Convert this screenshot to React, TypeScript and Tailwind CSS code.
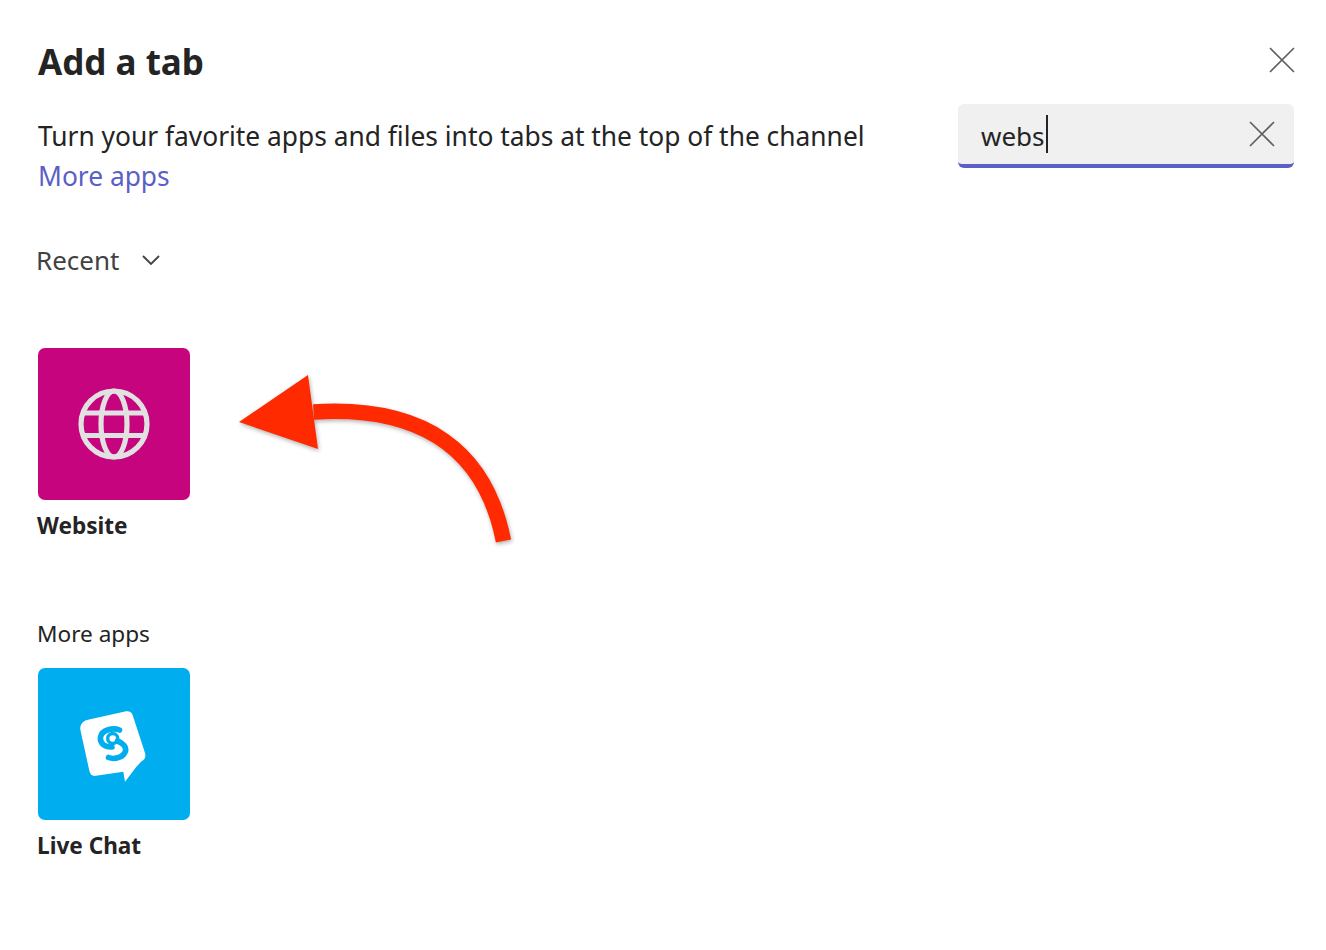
import React from "react";

function XIcon({ className }: { className: string }) {
  return (
    <svg className={className} viewBox="0 0 26 26" fill="none" stroke="#616161" strokeWidth="1.7">
      <path d="M1 1 L25 25 M25 1 L1 25" />
    </svg>
  );
}

function Globe() {
  return (
    <svg className="w-[76px] h-[76px]" viewBox="0 0 76 76" fill="none" stroke="#e1e1e1" strokeWidth="5.2">
      <circle cx="38" cy="38" r="33" />
      <ellipse cx="38" cy="38" rx="13" ry="33" />
      <path d="M8 27 H68 M8 49.5 H68" />
    </svg>
  );
}

function ChatLogo() {
  return (
    <svg className="w-[76px] h-[80px]" viewBox="0 0 76 80" fill="none">
      <path
        d="M12 15.8 L49 7.6 C53 6.8 55.6 8 56.8 11.4 L69 49 C70.2 53 68.6 56 65 57.8 L60 63.3 L49 77.7 L47.3 67.7 L20 71.8 C16.4 72.4 14.2 70.6 13.4 67 L4.4 26 C3.6 20.8 7 16.8 12 15.8 Z"
        fill="#ffffff"
      />
      <path
        d="M43.5 26 C37 23.5 26 25.5 24.5 33 C23.5 39.5 29 43.5 36 43"
        stroke="#00aeef"
        strokeWidth="5.6"
        strokeLinecap="round"
      />
      <circle cx="36.7" cy="34.5" r="5" stroke="#00aeef" strokeWidth="3.4" />
      <path d="M41.5 37 C47 39 50.5 43 49.5 47 C48 53 39 56 32.5 53.5" stroke="#00aeef" strokeWidth="5.6" strokeLinecap="round" />
    </svg>
  );
}

function Arrow() {
  return (
    <svg
      className="absolute left-[230px] top-[365px] w-[295px] h-[190px] drop-shadow-[1px_2px_2px_rgba(0,0,0,0.3)]"
      viewBox="230 365 295 190"
      fill="none"
    >
      <path d="M313.5 412 C 425 405, 486 452, 503.5 541" stroke="#ff2a00" strokeWidth="15.5" />
      <path d="M239 422 L308 375 L318 449 Z" fill="#ff2a00" />
    </svg>
  );
}

function Tile({ color, label, children }: { color: string; label: string; children: React.ReactNode }) {
  return (
    <div className="w-[152px]">
      <div className={`w-[152px] h-[152px] rounded-[7px] flex items-center justify-center ${color}`}>{children}</div>
      <div className="mt-[10px] ml-[-1px] text-[22.6px] leading-[32px] font-bold text-[#242424] whitespace-nowrap">{label}</div>
    </div>
  );
}

export default function App() {
  return (
    <div className="relative w-[1326px] h-[950px] bg-white overflow-hidden pl-[38px] pr-[32px] font-['Noto_Sans','Open_Sans',sans-serif] text-[#242424]">
      <div className="flex items-center justify-between pt-[38px]">
        <h1 className="text-[35px] leading-[48px] font-bold">Add a tab</h1>
        <XIcon className="w-[26px] h-[26px] mr-[-1px] mb-[4px]" />
      </div>
      <div className="flex justify-between items-start mt-[18px]">
        <div className="text-[26.35px] leading-[40px] pt-[12px]">
          <div>Turn your favorite apps and files into tabs at the top of the channel</div>
          <div className="text-[#5b5fc7]">More apps</div>
        </div>
        <div className="w-[336px] h-[64px] bg-[#f0f0f0] rounded-[6px] border-b-4 border-[#5b5fc7] flex items-center justify-between pl-[23px] pr-[19px]">
          <div className="flex items-center text-[26px] leading-[40px]">
            <span className="pt-[4px]">webs</span>
            <span className="w-[2px] h-[38px] bg-[#242424] ml-[1px]" />
          </div>
          <XIcon className="w-[26px] h-[26px]" />
        </div>
      </div>
      <div className="flex items-center gap-[22px] mt-[44px] ml-[-2px] text-[26px] leading-[40px] text-[#424242]">
        <span>Recent</span>
        <svg className="w-[18px] h-[10px] ml-[1px]" viewBox="0 0 18 10" fill="none" stroke="#424242" strokeWidth="1.8">
          <path d="M1 1 L9 9 L17 1" />
        </svg>
      </div>
      <div className="mt-[68px]">
        <Tile color="bg-[#c6047d]" label="Website">
          <Globe />
        </Tile>
      </div>
      <div className="mt-[76px] ml-[-1px] text-[22.6px] leading-[32px] text-[#242424]">More apps</div>
      <div className="mt-[18px]">
        <Tile color="bg-[#00aeef]" label="Live Chat">
          <ChatLogo />
        </Tile>
      </div>
      <Arrow />
    </div>
  );
}
